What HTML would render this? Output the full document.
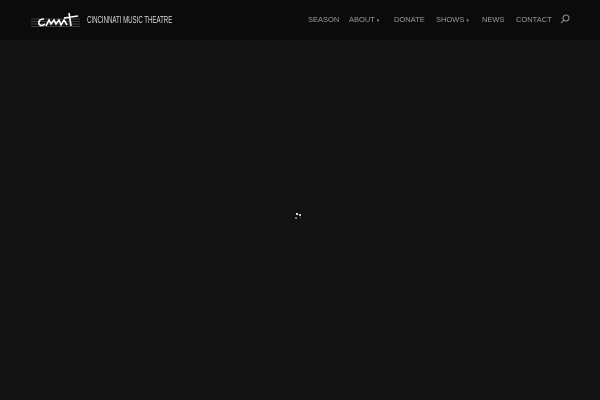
<!DOCTYPE html><html><head><style>
body{margin:0;width:600px;height:400px;background:#131313;overflow:hidden;font-family:"Liberation Sans",sans-serif}
.h{position:absolute;top:0;left:0;width:600px;height:40px;background:#0b0b0b}
.n{position:absolute;top:15px;font-size:7.5px;color:#9a9a9a;letter-spacing:0}
</style></head><body>
<div class="h">
<svg style="position:absolute;left:31px;top:10px" width="52" height="20" viewBox="0 0 52 20">
<g stroke="#888" stroke-width="0.4"><line x1="0" y1="9" x2="49" y2="9"/><line x1="0" y1="11.5" x2="49" y2="11.5"/><line x1="0" y1="14" x2="49" y2="14"/><line x1="0" y1="16.5" x2="49" y2="16.5"/></g>
<path d="M13 9 Q7 9 8 14 Q10 17 14 14 M15 16 L18 10 L20 14 L23 10 L25 14 L28 10 L30 15 L33 10 L36 15 M38 3 L40 16 M33 8 L47 6" stroke="#fff" stroke-width="1.6" fill="none"/>
</svg>
<div style="position:absolute;left:87px;top:14px;font-size:10.5px;color:#ddd;transform:scaleX(.58);transform-origin:0 0;white-space:nowrap">CINCINNATI MUSIC THEATRE</div>
<span class="n" style="left:308px">SEASON</span>
<span class="n" style="left:349px">ABOUT <span style="font-size:5px">▾</span></span>
<span class="n" style="left:394px">DONATE</span>
<span class="n" style="left:436px">SHOWS <span style="font-size:5px">▾</span></span>
<span class="n" style="left:482px">NEWS</span>
<span class="n" style="left:516px">CONTACT</span>
<svg style="position:absolute;left:560px;top:14px" width="10" height="10"><circle cx="6" cy="4" r="3" stroke="#999" fill="none"/><line x1="4" y1="6" x2="1" y2="9" stroke="#999"/></svg>
</div>
<div style="position:absolute;left:296px;top:213px;width:2px;height:2px;background:#ddd"></div>
<div style="position:absolute;left:299px;top:214px;width:2px;height:2px;background:#bbb"></div>
<div style="position:absolute;left:295px;top:217px;width:2px;height:2px;background:#777"></div>
<div style="position:absolute;left:300px;top:217px;width:1px;height:1px;background:#666"></div>
</body></html>
